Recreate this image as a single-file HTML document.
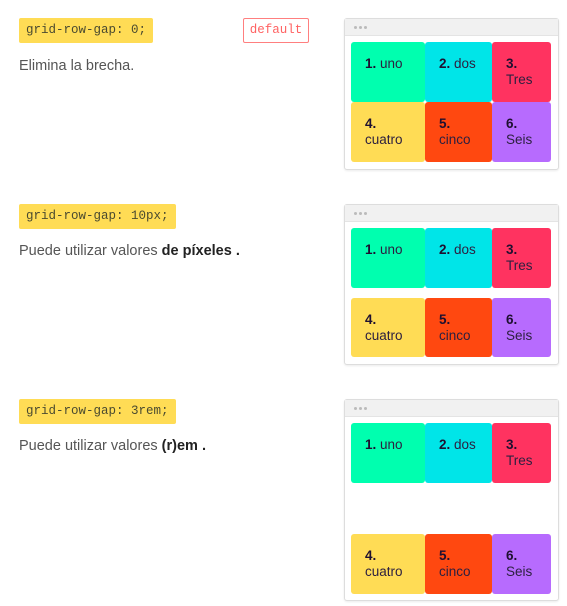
<!DOCTYPE html>
<html><head><meta charset="utf-8"><style>
*{box-sizing:border-box;margin:0;padding:0}
body{width:567px;height:606px;background:#fff;font-family:"Liberation Sans",sans-serif;position:relative;overflow:hidden}
.code{position:absolute;left:19px;height:25px;background:#ffdc55;border-radius:2px;font-family:"Liberation Mono",monospace;font-size:12.5px;color:#4a4a30;padding:0 7px;line-height:25px}
.txt{position:absolute;left:19px;font-size:14.5px;color:#555}
.txt b{color:#222}
.def{position:absolute;left:243px;top:18px;width:66px;height:25px;border:1.5px solid #ff7f7f;border-radius:2px;color:#ff6262;font-family:"Liberation Mono",monospace;font-size:12.5px;text-align:center;line-height:22px}
.win{position:absolute;left:344px;width:215px;border:1px solid #ddd;border-radius:3px;background:#fff;box-shadow:0 1px 2px rgba(0,0,0,.08)}
.hd{height:17px;background:#f1f1f1;border-bottom:1px solid #e4e4e4;position:relative}
.hd i{position:absolute;top:7px;width:3px;height:3px;border-radius:50%;background:#bbb}
.it{position:absolute;font-size:13.5px;color:#2d2040;padding:14px 0 0 14px;line-height:16px;border-radius:3px}
.it b{color:#1e1030}
.c1{background:#00ffaf}.c2{background:#00e5e8}.c3{background:#ff3360}.c4{background:#ffdc55}.c5{background:#ff4810}.c6{background:#b76bfe}
</style></head><body>

<div class="code" style="top:18px">grid-row-gap: 0;</div>
<div class="def">default</div>
<div class="txt" style="top:58px">Elimina la brecha.</div>

<div class="code" style="top:204px">grid-row-gap: 10px;</div>
<div class="txt" style="top:243px">Puede utilizar valores <b>de píxeles .</b></div>

<div class="code" style="top:399px">grid-row-gap: 3rem;</div>
<div class="txt" style="top:438px">Puede utilizar valores <b>(r)em .</b></div>

<div class="win" style="top:18px;height:152px"><div class="hd"><i style="left:9px"></i><i style="left:14px"></i><i style="left:19px"></i></div></div>
<div class="win" style="top:204px;height:161px"><div class="hd"><i style="left:9px"></i><i style="left:14px"></i><i style="left:19px"></i></div></div>
<div class="win" style="top:399px;height:202px"><div class="hd"><i style="left:9px"></i><i style="left:14px"></i><i style="left:19px"></i></div></div>

<div class="it c1" style="left:351px;top:42px;width:74px;height:60px"><b>1.</b> uno</div>
<div class="it c2" style="left:425px;top:42px;width:67px;height:60px"><b>2.</b> dos</div>
<div class="it c3" style="left:492px;top:42px;width:59px;height:60px"><b>3.</b><br>Tres</div>
<div class="it c4" style="left:351px;top:102px;width:74px;height:60px"><b>4.</b><br>cuatro</div>
<div class="it c5" style="left:425px;top:102px;width:67px;height:60px"><b>5.</b><br>cinco</div>
<div class="it c6" style="left:492px;top:102px;width:59px;height:60px"><b>6.</b><br>Seis</div>

<div class="it c1" style="left:351px;top:228px;width:74px;height:60px"><b>1.</b> uno</div>
<div class="it c2" style="left:425px;top:228px;width:67px;height:60px"><b>2.</b> dos</div>
<div class="it c3" style="left:492px;top:228px;width:59px;height:60px"><b>3.</b><br>Tres</div>
<div class="it c4" style="left:351px;top:298px;width:74px;height:59px"><b>4.</b><br>cuatro</div>
<div class="it c5" style="left:425px;top:298px;width:67px;height:59px"><b>5.</b><br>cinco</div>
<div class="it c6" style="left:492px;top:298px;width:59px;height:59px"><b>6.</b><br>Seis</div>

<div class="it c1" style="left:351px;top:423px;width:74px;height:60px"><b>1.</b> uno</div>
<div class="it c2" style="left:425px;top:423px;width:67px;height:60px"><b>2.</b> dos</div>
<div class="it c3" style="left:492px;top:423px;width:59px;height:60px"><b>3.</b><br>Tres</div>
<div class="it c4" style="left:351px;top:534px;width:74px;height:60px"><b>4.</b><br>cuatro</div>
<div class="it c5" style="left:425px;top:534px;width:67px;height:60px"><b>5.</b><br>cinco</div>
<div class="it c6" style="left:492px;top:534px;width:59px;height:60px"><b>6.</b><br>Seis</div>

</body></html>
